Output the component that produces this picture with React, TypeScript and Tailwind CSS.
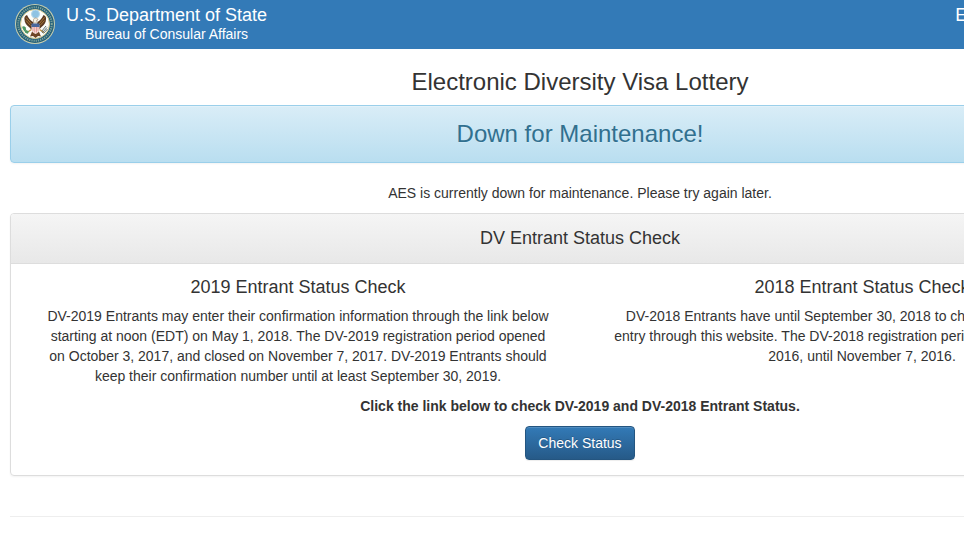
type StatusCheck = {
  year: string;
  text: string;
};

const statusChecks: StatusCheck[] = [
  {
    year: "2019",
    text: "DV-2019 Entrants may enter their confirmation information through the link below starting at noon (EDT) on May 1, 2018. The DV-2019 registration period opened on October 3, 2017, and closed on November 7, 2017. DV-2019 Entrants should keep their confirmation number until at least September 30, 2019.",
  },
  {
    year: "2018",
    text: "DV-2018 Entrants have until September 30, 2018 to check the status of their entry through this website. The DV-2018 registration period was from October 4, 2016, until November 7, 2016.",
  },
];

function Seal() {
  return (
    <svg viewBox="0 0 80 80" className="size-10 shrink-0" aria-hidden="true">
      <circle cx="40" cy="40" r="40" fill="#c9cfae" />
      <circle cx="40" cy="40" r="38" fill="#24607a" />
      <circle
        cx="40"
        cy="40"
        r="33.5"
        fill="none"
        stroke="#7fa39b"
        strokeWidth="4"
        strokeDasharray="2.4 2"
      />
      <circle cx="40" cy="40" r="29" fill="#fdfdf8" stroke="#d3c88b" strokeWidth="2" />

      {/* glory */}
      <circle cx="41" cy="20" r="8" fill="#8fc3e3" stroke="#b5d7ea" strokeWidth="2" />

      {/* wings */}
      <path
        d="M36 36C31 33 27 29 24 22c-4 1-6 5-5 9 0 6 4 11 9 15l6 6 4-8z"
        fill="#5b3a22"
      />
      <path
        d="M45 36c5-3 9-7 12-14 4 1 6 5 5 9 0 6-4 11-9 15l-6 6-4-8z"
        fill="#5b3a22"
      />
      <path
        d="M22 27l11 13M22 33l9 10M59 27L48 40M59 33L50 43"
        stroke="#a87936"
        strokeWidth="2"
        fill="none"
      />

      {/* tail and legs */}
      <path d="M35 53h12l5 12-6-1-5 4-5-4-6 1z" fill="#6d4526" />
      <path d="M33 51l-9 6M49 51l9 6" stroke="#c28d36" strokeWidth="3" />

      {/* head */}
      <path d="M37 38v-6c0-3 2-4 4-4s5 1 5 4l-3 1 2 5z" fill="#f4f0e4" stroke="#8b6c46" />

      {/* shield */}
      <path d="M33 42h16v9c0 4-4 7-8 9-4-2-8-5-8-9z" fill="#f7e0dc" />
      <path d="M36 46v8M39.500 46v11M43 46v11M46 46v8" stroke="#dc8380" strokeWidth="1.500" />
      <path d="M33 39h16v7H33z" fill="#49679c" />

      {/* olive branch and arrows */}
      <path
        d="M16 45q2 8 10 13M17 51l5-1M20 56l5-2M24 59l2-5M17 46l4 3"
        stroke="#4e9862"
        strokeWidth="4"
        fill="none"
      />
      <path
        d="M54 58l10-11M57 59l8-9M53 55l9-11"
        stroke="#627475"
        strokeWidth="2"
        fill="none"
      />
    </svg>
  );
}

function Header() {
  return (
    <header className="flex h-[49px] items-start justify-between bg-[#337ab7] pr-3 pl-[15px] text-white">
      <div className="flex items-center gap-[11px] pt-1">
        <Seal />
        <div className="text-center">
          <div className="text-lg leading-5">U.S. Department of State</div>
          <div className="text-sm leading-[18px]">Bureau of Consular Affairs</div>
        </div>
      </div>
      <div className="pt-[5px] text-lg leading-5">Electronic Diversity Visa</div>
    </header>
  );
}

function StatusColumn({ year, text }: StatusCheck) {
  return (
    <section className="px-[30px]">
      <h4 className="mb-[9px] text-lg leading-5">{year} Entrant Status Check</h4>
      <p>{text}</p>
    </section>
  );
}

export default function App() {
  return (
    <div className="overflow-x-hidden bg-white font-['Liberation_Sans',Arial,sans-serif] text-sm leading-5 text-[#333]">
      <div className="min-w-[1160px]">
        <Header />

        <main className="px-2.5 pt-5 text-center">
          <h1 className="mb-2.5 text-2xl leading-[26px]">
            Electronic Diversity Visa Lottery
          </h1>

          <div
            role="alert"
            className="mb-5 rounded border border-[#9acfea] bg-linear-to-b from-[#d9edf7] to-[#b9def0] py-[15px] text-[#31708f] shadow-[inset_0_1px_0_rgba(255,255,255,0.25),0_1px_2px_rgba(0,0,0,0.05)] text-shadow-[0_1px_0_rgba(255,255,255,0.2)]"
          >
            <h2 className="text-2xl leading-[26px]">Down for Maintenance!</h2>
          </div>

          <p className="mb-2.5">
            AES is currently down for maintenance. Please try again later.
          </p>

          <div className="mb-10 rounded border border-[#ddd] shadow-[0_1px_2px_rgba(0,0,0,0.05)]">
            <div className="rounded-t-[3px] border-b border-[#ddd] bg-linear-to-b from-[#f5f5f5] to-[#e8e8e8] pt-3.5 pb-[15px]">
              <h3 className="text-lg leading-5">DV Entrant Status Check</h3>
            </div>

            <div className="px-[5px] pt-[13px] pb-[15px]">
              <div className="mb-2.5 grid grid-cols-2">
                {statusChecks.map((check) => (
                  <StatusColumn key={check.year} {...check} />
                ))}
              </div>
              <p className="mb-2.5 font-bold">
                Click the link below to check DV-2019 and DV-2018 Entrant Status.
              </p>
              <button
                type="button"
                className="rounded border border-[#245580] bg-linear-to-b from-[#337ab7] to-[#265a88] px-3 py-1.5 text-white shadow-[inset_0_1px_0_rgba(255,255,255,0.15),0_1px_1px_rgba(0,0,0,0.075)] text-shadow-[0_-1px_0_rgba(0,0,0,0.2)]"
              >
                Check Status
              </button>
            </div>
          </div>

          <hr className="mb-5 border-[#eee]" />
        </main>
      </div>
    </div>
  );
}
